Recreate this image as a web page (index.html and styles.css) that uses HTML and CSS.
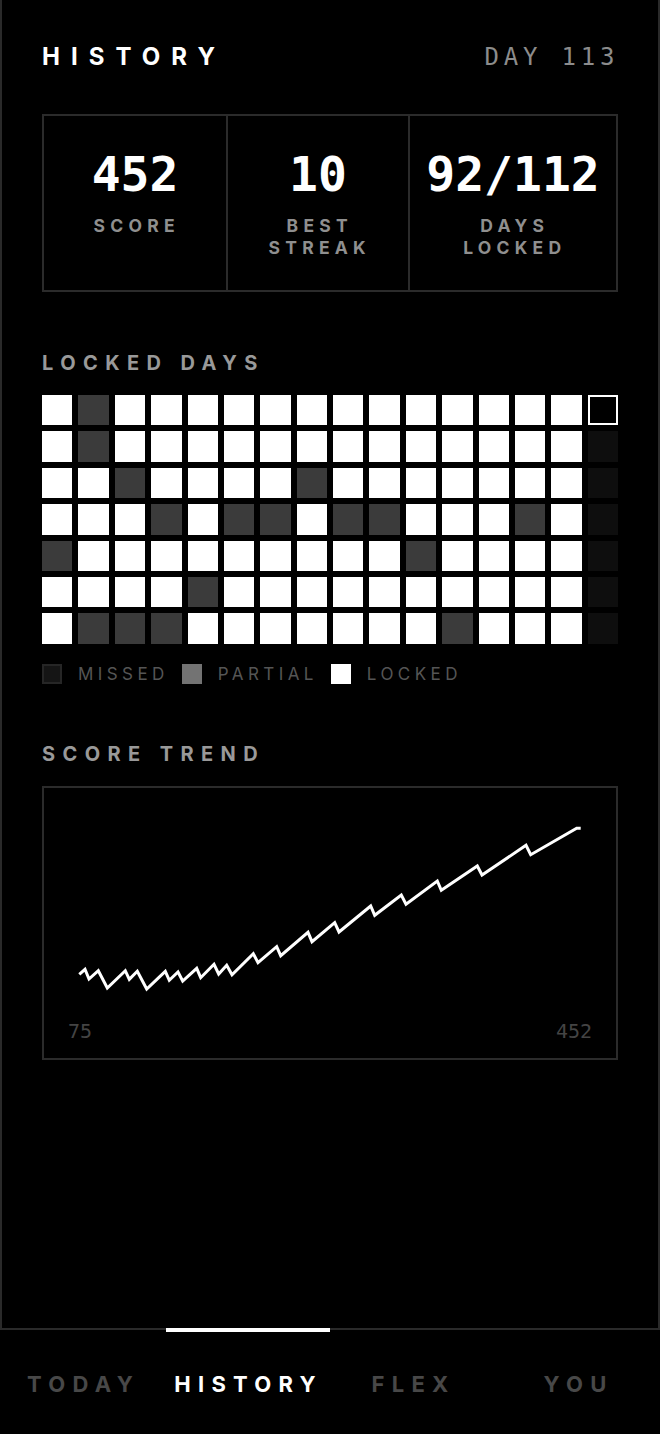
FILE: index.html
```html
<!DOCTYPE html>
<html lang="en">
<head>
<meta charset="utf-8">
<title>History</title>
<link rel="stylesheet" href="styles.css">
</head>
<body>
<main class="screen">
  <header class="topbar">
    <h1 class="title">HISTORY</h1>
    <span class="day">DAY 113</span>
  </header>

  <section class="stats">
    <div class="stat">
      <div class="stat-num">452</div>
      <div class="stat-label">SCORE</div>
    </div>
    <div class="stat">
      <div class="stat-num">10</div>
      <div class="stat-label">BEST<br>STREAK</div>
    </div>
    <div class="stat">
      <div class="stat-num">92/112</div>
      <div class="stat-label">DAYS<br>LOCKED</div>
    </div>
  </section>

  <h2 class="section-title">LOCKED DAYS</h2>
  <div class="days">
    <div class="cell on"></div><div class="cell off"></div><div class="cell on"></div><div class="cell on"></div><div class="cell on"></div><div class="cell on"></div><div class="cell on"></div><div class="cell on"></div><div class="cell on"></div><div class="cell on"></div><div class="cell on"></div><div class="cell on"></div><div class="cell on"></div><div class="cell on"></div><div class="cell on"></div><div class="cell today"></div>
    <div class="cell on"></div><div class="cell off"></div><div class="cell on"></div><div class="cell on"></div><div class="cell on"></div><div class="cell on"></div><div class="cell on"></div><div class="cell on"></div><div class="cell on"></div><div class="cell on"></div><div class="cell on"></div><div class="cell on"></div><div class="cell on"></div><div class="cell on"></div><div class="cell on"></div><div class="cell future"></div>
    <div class="cell on"></div><div class="cell on"></div><div class="cell off"></div><div class="cell on"></div><div class="cell on"></div><div class="cell on"></div><div class="cell on"></div><div class="cell off"></div><div class="cell on"></div><div class="cell on"></div><div class="cell on"></div><div class="cell on"></div><div class="cell on"></div><div class="cell on"></div><div class="cell on"></div><div class="cell future"></div>
    <div class="cell on"></div><div class="cell on"></div><div class="cell on"></div><div class="cell off"></div><div class="cell on"></div><div class="cell off"></div><div class="cell off"></div><div class="cell on"></div><div class="cell off"></div><div class="cell off"></div><div class="cell on"></div><div class="cell on"></div><div class="cell on"></div><div class="cell off"></div><div class="cell on"></div><div class="cell future"></div>
    <div class="cell off"></div><div class="cell on"></div><div class="cell on"></div><div class="cell on"></div><div class="cell on"></div><div class="cell on"></div><div class="cell on"></div><div class="cell on"></div><div class="cell on"></div><div class="cell on"></div><div class="cell off"></div><div class="cell on"></div><div class="cell on"></div><div class="cell on"></div><div class="cell on"></div><div class="cell future"></div>
    <div class="cell on"></div><div class="cell on"></div><div class="cell on"></div><div class="cell on"></div><div class="cell off"></div><div class="cell on"></div><div class="cell on"></div><div class="cell on"></div><div class="cell on"></div><div class="cell on"></div><div class="cell on"></div><div class="cell on"></div><div class="cell on"></div><div class="cell on"></div><div class="cell on"></div><div class="cell future"></div>
    <div class="cell on"></div><div class="cell off"></div><div class="cell off"></div><div class="cell off"></div><div class="cell on"></div><div class="cell on"></div><div class="cell on"></div><div class="cell on"></div><div class="cell on"></div><div class="cell on"></div><div class="cell on"></div><div class="cell off"></div><div class="cell on"></div><div class="cell on"></div><div class="cell on"></div><div class="cell future"></div>
  </div>

  <div class="legend">
    <div class="legend-item"><span class="swatch swatch-missed"></span><span class="legend-text">MISSED</span></div>
    <div class="legend-item"><span class="swatch swatch-partial"></span><span class="legend-text">PARTIAL</span></div>
    <div class="legend-item"><span class="swatch swatch-locked"></span><span class="legend-text">LOCKED</span></div>
  </div>

  <h2 class="section-title trend-title">SCORE TREND</h2>
  <div class="chart">
    <svg class="trend" viewBox="44 788 572 270" width="572" height="270" aria-hidden="true">
      <polyline fill="none" stroke="#fff" stroke-width="3" stroke-linejoin="miter" stroke-linecap="butt"
        points="79.3,974.3 85,969.3 89,979 98.3,970.7 107.3,988 125.3,970.7 129.3,979.3 137.3,971.3 146.7,989 165.3,971.3 169.3,980.3 178,972 182.7,981 196.7,968.3 200.7,977.7 214,964.3 218.7,974 226.7,965.3 232,974.7 253.3,953.7 258,962.7 276.7,946.7 280.7,955.7 308,932.3 312,941.7 334.7,922.7 339,932 370.7,906 374.7,915.3 401.3,895 406,904.3 437.3,881 441.3,890.3 477.3,866 482,875 526,845.3 530.7,854.7 576.7,828.3 580.7,828.3"/>
    </svg>
    <div class="chart-axis">
      <span>75</span>
      <span>452</span>
    </div>
  </div>
</main>

<nav class="tabbar">
  <a class="tab">TODAY</a>
  <a class="tab active">HISTORY</a>
  <a class="tab">FLEX</a>
  <a class="tab">YOU</a>
</nav>
</body>
</html>
```

FILE: styles.css
```css
html, body {
  margin: 0;
  padding: 0;
  background: #000;
}

body {
  width: 660px;
  font-family: Inter, "Noto Sans", sans-serif;
  color: #fff;
}

.screen {
  height: 1328px;
  box-sizing: border-box;
  border-left: 2px solid #2a2a2a;
  border-right: 2px solid #2a2a2a;
  padding: 0 40px;
}

.topbar {
  display: flex;
  justify-content: space-between;
  align-items: baseline;
  padding-top: 44px;
}

.title {
  margin: 0;
  font: 700 24px/25px Inter, sans-serif;
  letter-spacing: 0.46em;
  color: #fff;
}

.day {
  font: 400 24px/25px "DejaVu Sans Mono", monospace;
  letter-spacing: 0.2em;
  margin-right: -0.05em;
  color: #8c8c8c;
}

.stats {
  display: grid;
  grid-template-columns: 182fr 180fr 206fr;
  gap: 2px;
  margin-top: 44px;
  height: 178px;
  box-sizing: border-box;
  border: 2px solid #2b2b2b;
  background: #2b2b2b;
}

.stat {
  background: #000;
  display: flex;
  flex-direction: column;
  align-items: center;
  padding-top: 34px;
}

.stat-num {
  font: 700 48px/48px "DejaVu Sans Mono", monospace;
  color: #fff;
}

.stat-label {
  margin-top: 17px;
  font: 700 17.5px/22px Inter, sans-serif;
  letter-spacing: 0.3em;
  padding-left: 0.2em;
  color: #8f8f8f;
  text-align: center;
}

.section-title {
  margin: 61px 0 22px;
  font: 700 20px/20px Inter, sans-serif;
  letter-spacing: 0.37em;
  color: #999;
}

.trend-title {
  margin-top: 60px;
}

.days {
  display: grid;
  grid-template-columns: repeat(16, 1fr);
  gap: 6px;
}

.cell {
  aspect-ratio: 1 / 1;
  box-sizing: border-box;
}

.cell.on { background: #fff; }
.cell.off { background: #3b3b3b; }
.cell.future { background: #0e0e0e; }
.cell.today { background: #000; border: 2px solid #fff; }

.legend {
  display: flex;
  align-items: center;
  gap: 13px;
  margin-top: 20px;
  height: 20px;
}

.legend-item {
  display: flex;
  align-items: center;
  gap: 16px;
}

.swatch {
  width: 20px;
  height: 20px;
  box-sizing: border-box;
}

.swatch-missed { background: #151515; border: 2px solid #262626; }
.swatch-partial { background: #737373; }
.swatch-locked { background: #fff; }

.legend-text {
  font: 400 17px/20px Inter, sans-serif;
  letter-spacing: 0.26em;
  color: #555;
}

.chart {
  display: grid;
  height: 274px;
  box-sizing: border-box;
  border: 2px solid #2b2b2b;
}

.trend {
  grid-area: 1 / 1;
  display: block;
}

.chart-axis {
  grid-area: 1 / 1;
  align-self: end;
  display: flex;
  justify-content: space-between;
  padding: 0 24px 17px;
  font: 400 20px/20px "DejaVu Sans Mono", monospace;
  color: #444;
}

.tabbar {
  display: grid;
  grid-template-columns: repeat(4, 1fr);
  height: 106px;
  box-sizing: border-box;
  border-top: 2px solid #2a2a2a;
}

.tab {
  position: relative;
  display: flex;
  align-items: center;
  justify-content: center;
  padding-top: 3px;
  padding-left: 0.1em;
  font: 700 22px/22px Inter, sans-serif;
  letter-spacing: 0.33em;
  color: #484848;
  text-decoration: none;
}

.tab.active {
  color: #fff;
}

.tab.active::before {
  content: "";
  position: absolute;
  top: -2px;
  left: 1px;
  right: 0;
  height: 4px;
  background: #fff;
}
```
